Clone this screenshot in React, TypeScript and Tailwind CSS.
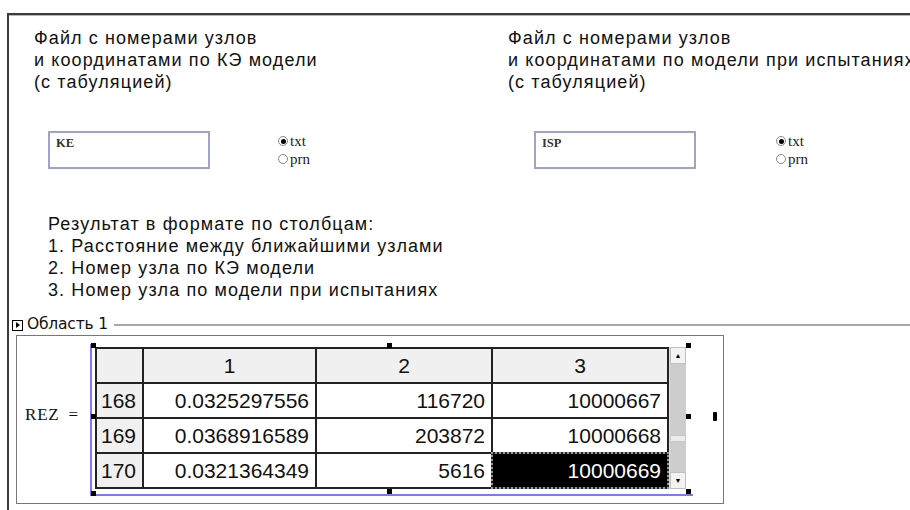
import React from 'react';

type Row = { idx: string; a: string; b: string; c: string };

const rows: Row[] = [
	{ idx: '168', a: '0.0325297556', b: '116720', c: '10000667' },
	{ idx: '169', a: '0.0368916589', b: '203872', c: '10000668' },
	{ idx: '170', a: '0.0321364349', b: '5616', c: '10000669' }
];

function Radio({ checked, label }: { checked?: boolean; label: string }) {
	return (
		<div className="flex items-center gap-[2px] h-[18px]">
			<span className="w-[10px] h-[10px] rounded-full border border-[#888] bg-white flex items-center justify-center">
				{checked && <span className="w-[5px] h-[5px] rounded-full bg-black" />}
			</span>
			<span className="font-['Liberation_Serif',serif] text-[15px] leading-none text-[#222]">{label}</span>
		</div>
	);
}

function FileField({ value }: { value: string }) {
	return (
		<div className="w-[162px] h-[38px] border-2 border-[#9fa3c8] bg-white px-[6px] pt-[3px]">
			<div className="font-['Liberation_Serif',serif] text-[12.5px] leading-[14px] font-bold text-[#333]">{value}</div>
		</div>
	);
}

function Caption({ lines }: { lines: string[] }) {
	return (
		<div className="font-['Liberation_Sans',sans-serif] text-[18px] leading-[22px] tracking-[1.1px] text-[#111]">
			{lines.map((l) => (
				<div key={l} className="whitespace-nowrap">
					{l}
				</div>
			))}
		</div>
	);
}

function Handle({ className }: { className: string }) {
	return <span className={`absolute w-[5px] h-[5px] bg-black ${className}`} />;
}

function ResultGrid() {
	const cell = 'border-2 border-[#222] h-[35px] px-[6px]';
	return (
		<div className="relative flex">
			{/* selection frame around the matrix */}
			<span className="absolute left-[-5px] top-[-3px] bottom-[-7px] w-[2px] bg-[#7b7bf0]" />
			<span className="absolute left-[-5px] right-[-7px] bottom-[-7px] h-[2px] bg-[#7b7bf0]" />
			<Handle className="left-[-4px] top-[-4px]" />
			<Handle className="left-[-4px] top-[67px]" />
			<Handle className="left-[-4px] bottom-[-7px]" />
			<Handle className="left-[292px] top-[-4px]" />
			<Handle className="left-[292px] bottom-[-5px]" />
			<Handle className="right-[-5px] top-[-4px]" />
			<Handle className="right-[-5px] top-[67px]" />
			<Handle className="right-[-5px] bottom-[-5px]" />

			<table className="border-collapse font-['Liberation_Sans',sans-serif] text-[21px] text-[#111]">
				<thead>
					<tr className="bg-[#f0f0f0]">
						<th className={`${cell} w-[47px]`} />
						<th className={`${cell} w-[173px] font-normal`}>1</th>
						<th className={`${cell} w-[176px] font-normal`}>2</th>
						<th className={`${cell} w-[176px] font-normal`}>3</th>
					</tr>
				</thead>
				<tbody>
					{rows.map((r, i) => (
						<tr key={r.idx}>
							<td className={`${cell} bg-[#f0f0f0] text-left pl-[4px]`}>{r.idx}</td>
							<td className={`${cell} text-right`}>{r.a}</td>
							<td className={`${cell} text-right`}>{r.b}</td>
							{i === rows.length - 1 ? (
								<td className={`${cell} text-right bg-black text-white outline-2 outline-dotted outline-[#999] -outline-offset-1`}>
									{r.c}
								</td>
							) : (
								<td className={`${cell} text-right`}>{r.c}</td>
							)}
						</tr>
					))}
				</tbody>
			</table>

			{/* vertical scrollbar */}
			<div className="w-[17px] flex flex-col bg-[#cdcdcd] border-l border-[#ddd]">
				<div className="h-[17px] bg-[#f3f3f3] border border-[#c0c0c0] flex items-center justify-center">
					<span className="text-[7px] leading-none text-black">▲</span>
				</div>
				<div className="flex-1 flex flex-col justify-end pb-[30px]">
					<div className="h-[7px] bg-[#ececec] border border-[#c8c8c8]" />
				</div>
				<div className="h-[17px] bg-[#f3f3f3] border border-[#c0c0c0] flex items-center justify-center">
					<span className="text-[7px] leading-none text-black">▼</span>
				</div>
			</div>
		</div>
	);
}

export default function App() {
	return (
		<div className="w-[910px] h-[510px] bg-white overflow-hidden pt-[13px] pl-[7px]">
			<div className="h-full border-t-2 border-l-2 border-[#3c3c3c]">
				<div className="h-px bg-[#b5b5b5]" />

				{/* input files */}
				<div className="flex pt-[11px]">
					<div className="w-[499px] pl-[25px]">
						<Caption lines={['Файл с номерами узлов', 'и координатами по КЭ модели', '(с табуляцией)']} />
						<div className="flex mt-[38px] ml-[14px]">
							<FileField value="KE" />
							<div className="ml-[68px] pt-[1px]">
								<Radio checked label="txt" />
								<Radio label="prn" />
							</div>
						</div>
					</div>
					<div className="flex-1 min-w-0 overflow-hidden">
						<Caption lines={['Файл с номерами узлов', 'и координатами по модели при испытаниях', '(с табуляцией)']} />
						<div className="flex mt-[38px] ml-[26px]">
							<FileField value="ISP" />
							<div className="ml-[80px] pt-[1px]">
								<Radio checked label="txt" />
								<Radio label="prn" />
							</div>
						</div>
					</div>
				</div>

				{/* output description */}
				<div className="pl-[39px] mt-[44px]">
					<Caption
						lines={[
							'Результат в формате по столбцам:',
							'1. Расстояние между ближайшими узлами',
							'2. Номер узла по КЭ модели',
							'3. Номер узла по модели при испытаниях'
						]}
					/>
				</div>

				{/* collapsible region */}
				<div className="flex items-center mt-[16px] pl-[3px] h-[16px]">
					<span className="w-[11px] h-[11px] border border-black flex items-center justify-center">
						<span className="w-0 h-0 border-y-[3px] border-y-transparent border-l-[4px] border-l-black ml-px" />
					</span>
					<span className="ml-[4px] font-['DejaVu_Sans',sans-serif] text-[15.5px] leading-none tracking-[-0.2px] text-[#111]">
						Область 1
					</span>
					<span className="flex-1 ml-[6px] h-[2px] bg-[#a8a8a8]" />
				</div>

				<div className="relative ml-[7px] mt-[2px] w-[708px] h-[169px] border border-[#777] flex items-center pl-[8px] pb-[3px]">
					<span className="w-[70px] flex items-center font-['Liberation_Serif',serif] text-[17px] tracking-[0.8px] text-[#111] pb-[6px]">
						REZ<span className="ml-[9px]">=</span>
					</span>
					<ResultGrid />
					<span className="absolute left-[696px] top-[76px] w-[4px] h-[9px] bg-black rounded-[1px]" />
				</div>
			</div>
		</div>
	);
}
